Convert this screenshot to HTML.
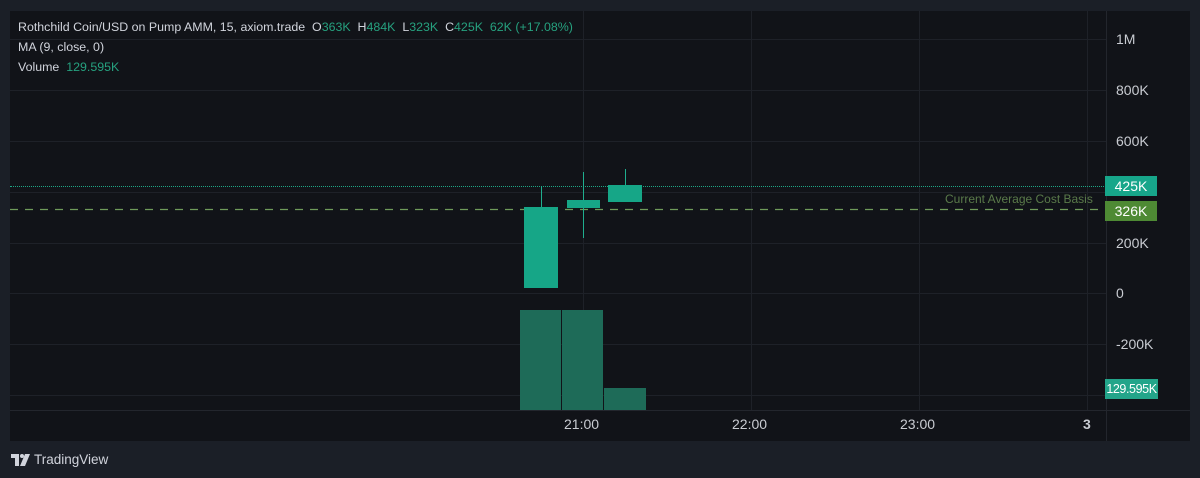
<!DOCTYPE html><html><head><style>
body{margin:0;width:1200px;height:478px;background:#1b1f27;position:relative;overflow:hidden;font-family:"Liberation Sans",sans-serif;}
.a{position:absolute}
.p{left:10px;top:11px;width:1180px;height:430px;background:#111318;}
.h{height:1px;background:#1e2128;left:10px;width:1096px}
.v{width:1px;background:#1e2128;top:11px;height:399px}
.lbl{color:#c9ccd2;font-size:14px;left:1116px}
.t{color:#c9ccd2;font-size:14px;top:416px}
.g{color:#26a17f}
.c{background:#16a687}
.w{background:#1fae8e}
.vol{background:#1e6b58}
</style></head><body>
<div class="a p"></div>
<div class="a h" style="top:39px"></div><div class="a h" style="top:90px"></div><div class="a h" style="top:141px"></div><div class="a h" style="top:192px"></div><div class="a h" style="top:243px"></div><div class="a h" style="top:293px"></div><div class="a h" style="top:344px"></div><div class="a h" style="top:395px"></div>
<div class="a v" style="left:583px"></div><div class="a v" style="left:751px"></div><div class="a v" style="left:919px"></div><div class="a v" style="left:1087px"></div>
<div class="a" style="left:1106px;top:11px;width:1px;height:430px;background:#23262d"></div>
<div class="a" style="left:10px;top:410px;width:1180px;height:1px;background:#23262d"></div>
<div class="a" style="left:10px;top:186px;width:1096px;border-top:1px dotted #1ea585"></div>
<svg class="a" style="left:10px;top:208px" width="1096" height="3"><line x1="0" y1="1.5" x2="1096" y2="1.5" stroke="#6f9a5a" stroke-width="1.2" stroke-dasharray="8 7"/></svg>
<div class="a" style="left:945px;top:192px;font-size:12px;color:#5a7a4a">Current Average Cost Basis</div>
<div class="a w" style="left:541px;top:186px;width:1px;height:21px"></div>
<div class="a c" style="left:524px;top:207px;width:34px;height:81px"></div>
<div class="a w" style="left:583px;top:172px;width:1px;height:66px"></div>
<div class="a c" style="left:567px;top:200px;width:33px;height:8px"></div>
<div class="a w" style="left:625px;top:169px;width:1px;height:33px"></div>
<div class="a c" style="left:608px;top:185px;width:34px;height:17px"></div>
<div class="a vol" style="left:520px;top:310px;width:41px;height:100px"></div>
<div class="a vol" style="left:562px;top:310px;width:41px;height:100px"></div>
<div class="a vol" style="left:604px;top:388px;width:42px;height:22px"></div>
<div class="a" style="left:18px;top:17px;font-size:12.4px;color:#d1d4dc;line-height:20px">Rothchild Coin/USD on Pump AMM, 15, axiom.trade&nbsp; O<span class="g">363K</span>&nbsp; H<span class="g">484K</span>&nbsp; L<span class="g">323K</span>&nbsp; C<span class="g">425K</span>&nbsp; <span class="g">62K (+17.08%)</span><br>MA (9, close, 0)<br>Volume&nbsp; <span class="g">129.595K</span></div>
<div class="a lbl" style="top:31px">1M</div>
<div class="a lbl" style="top:82px">800K</div>
<div class="a lbl" style="top:133px">600K</div>
<div class="a lbl" style="top:235px">200K</div>
<div class="a lbl" style="top:285px">0</div>
<div class="a lbl" style="top:336px">-200K</div>
<div class="a" style="left:1105px;top:176px;width:52px;height:20px;background:#17a68a;color:#fff;font-size:14px;line-height:20px;text-align:center">425K</div>
<div class="a" style="left:1105px;top:201px;width:52px;height:20px;background:#4e8a34;color:#fff;font-size:14px;line-height:20px;text-align:center">326K</div>
<div class="a" style="left:1105px;top:379px;width:53px;height:20px;background:#23a58a;color:#fff;font-size:12.5px;line-height:20px;text-align:center;letter-spacing:-0.4px">129.595K</div>
<div class="a t" style="left:564px">21:00</div>
<div class="a t" style="left:732px">22:00</div>
<div class="a t" style="left:900px">23:00</div>
<div class="a t" style="left:1083px;font-weight:bold">3</div>
<svg class="a" style="left:11px;top:454px" width="20" height="12"><path d="M0 0H8V12H4V4H0Z" fill="#d1d4dc"/><circle cx="11" cy="2" r="2" fill="#d1d4dc"/><path d="M14 0H19L14 12H9Z" fill="#d1d4dc"/></svg>
<div class="a" style="left:34px;top:452px;font-size:13.5px;color:#d1d4dc">TradingView</div>
</body></html>
